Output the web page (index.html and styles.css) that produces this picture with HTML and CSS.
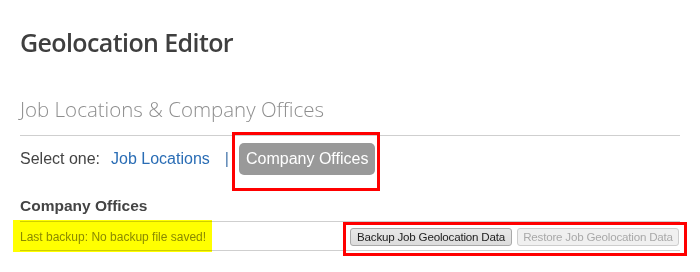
FILE: index.html
```html
<!DOCTYPE html>
<html lang="en">
<head>
  <meta charset="UTF-8">
  <title>Geolocation Editor</title>
  <link rel="stylesheet" href="styles.css">
</head>
<body>
  <div class="page">
    <h1 class="title">Geolocation Editor</h1>
    <h2 class="section-title">Job Locations &amp; Company Offices</h2>

    <div class="selector">
      <span class="select-label">Select one:</span>
      <a class="tab-link" href="#">Job Locations</a>
      <span class="sep">|</span>
      <span class="tab-active">Company Offices</span>
    </div>

    <h3 class="sub-title">Company Offices</h3>
    <div class="backup-row">
      <span class="last-backup">Last backup: No backup file saved!</span>
      <div class="actions">
        <button class="btn">Backup Job Geolocation Data</button>
        <button class="btn" disabled>Restore Job Geolocation Data</button>
      </div>
    </div>
  </div>

  <!-- annotation overlays -->
  <div class="mark mark-tab"></div>
  <div class="mark mark-actions"></div>
  <div class="highlight"></div>
</body>
</html>
```

FILE: styles.css
```css
* {
  margin: 0; padding: 0; box-sizing: border-box;
}
body {
  background: #fff;
  font-family: 'Liberation Sans', Arial, sans-serif;
  color: #444;
  position: relative;
  height: 272px;
  overflow: hidden;
}
.page {
  width: 700px;
  padding: 24px 20px 0 20px;
}
.title {
  font-family: 'Open Sans', sans-serif;
  font-weight: 600;
  font-size: 25px;
  letter-spacing: -0.6px;
  line-height: 36px;
  color: #3f3f3f;
}
.section-title {
  margin-top: 35px;
  font-family: 'Open Sans', sans-serif;
  font-weight: 300;
  font-size: 20.5px;
  line-height: 28px;
  color: #8e8e8e;
  padding-bottom: 12px;
  border-bottom: 1px solid #cfcfcf;
}
.selector {
  display: flex;
  align-items: center;
  margin-top: 7px;
  font-size: 16px;
  line-height: 18px;
}
.select-label { margin-right: 11px; }
.tab-link {
  color: #2a6db5;
  text-decoration: none;
}
.sep {
  color: #4a79ad;
  margin: 0 10px 0 15px;
}
.tab-active {
  background: #999;
  color: #fff;
  border-radius: 5px;
  padding: 7px 7px;
}
.sub-title {
  margin-top: 22px;
  font-size: 15.5px;
  line-height: 18px;
  color: #444;
}
.backup-row {
  margin-top: 6px;
  height: 30px;
  border-top: 1px solid #cfcfcf;
  border-bottom: 1px solid #cfcfcf;
  display: flex;
  align-items: center;
  justify-content: space-between;
}
.last-backup {
  font-size: 12px;
  line-height: 14px;
  color: #8a8a8a;
  padding-top: 2px;
}
.actions {
  display: flex;
  gap: 5px;
  padding-top: 2px;
  margin-right: 1px;
}
.btn {
  font-family: 'Liberation Sans', Arial, sans-serif;
  font-size: 11.6px;
  letter-spacing: -0.2px;
  width: 162px;
  height: 18px;
  line-height: 16px;
  padding: 0;
  text-align: center;
  color: #222;
  background: linear-gradient(#e8e8e8, #dcdcdc);
  border: 1px solid #a9a9a9;
  border-radius: 3px;
}
.btn:disabled {
  color: #a9a9a9;
  background: #f0f0f0;
  border-color: #cdcdcd;
}

/* annotations */
.mark {
  position: absolute;
  border: 3px solid #f00;
}
.mark-tab { left: 232px; top: 132px; width: 148px; height: 59px; }
.mark-actions { left: 343px; top: 222px; width: 344px; height: 34px; }
.highlight {
  position: absolute;
  left: 13px; top: 220px; width: 199px; height: 32px;
  background: #ffff00;
  mix-blend-mode: multiply;
}
```
